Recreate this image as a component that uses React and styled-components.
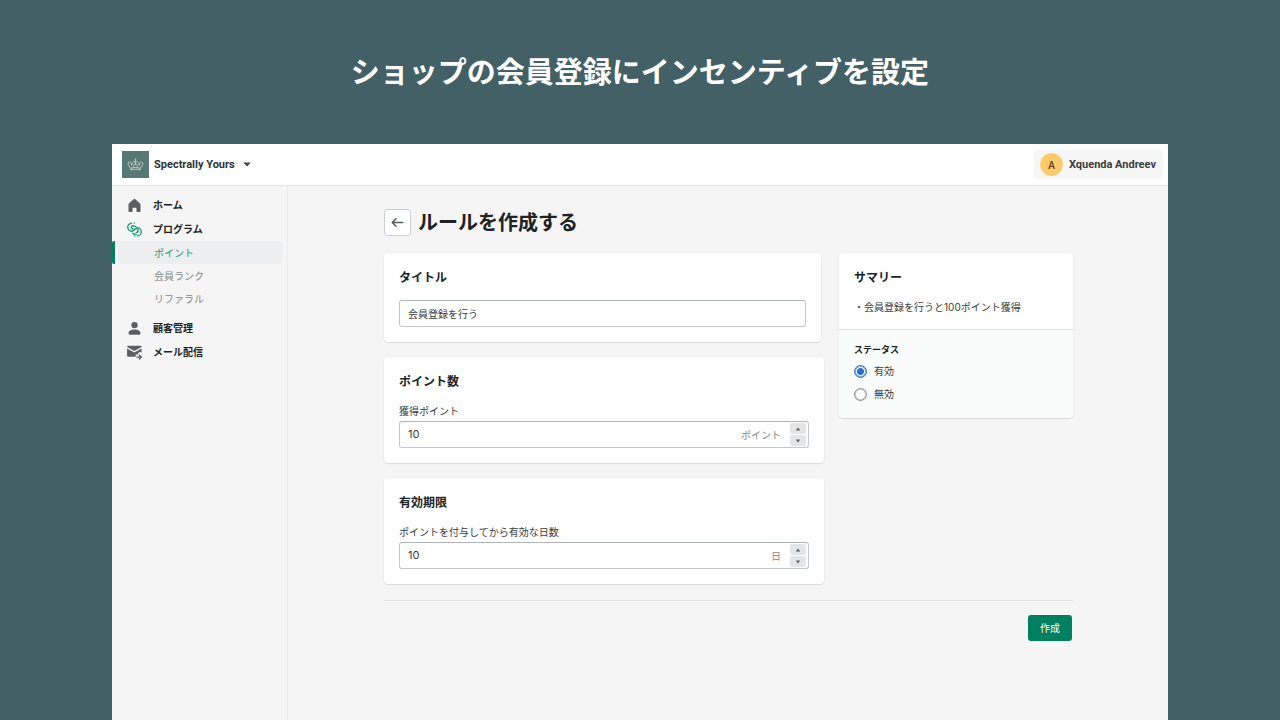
import React, { useState } from "react";
import styled, { createGlobalStyle } from "styled-components";

const GlobalStyle = createGlobalStyle`
  *, *::before, *::after { box-sizing: border-box; }
  body {
    margin: 0;
    background: #426066;
    color: #202223;
    font-family: Inter, "Noto Sans CJK JP", sans-serif;
    font-size: 10px;
    line-height: 14px;
  }
  button, input { font: inherit; color: inherit; margin: 0; }
  h1, h2, h3, p, ul { margin: 0; padding: 0; }
  ul { list-style: none; }
`;

const Slide = styled.div`
  min-height: 100vh;
  display: flex;
  flex-direction: column;
  padding: 0 112px;
`;

const Headline = styled.h1`
  height: 144px;
  padding-bottom: 4px;
  display: flex;
  align-items: center;
  justify-content: center;
  color: #fff;
  font-family: "Noto Sans CJK JP", sans-serif;
  font-size: 29px;
  line-height: 44px;
  font-weight: 700;
`;

const AppFrame = styled.div`
  flex: 1;
  display: flex;
  flex-direction: column;
  background: #f5f5f5;
`;

const TopBar = styled.header`
  display: flex;
  align-items: center;
  justify-content: space-between;
  height: 42px;
  padding: 0 5px 0 10px;
  background: #fff;
  border-bottom: 1px solid #e3e4e5;
`;

const StoreButton = styled.button`
  display: flex;
  align-items: center;
  padding: 0;
  border: 0;
  background: none;
  font-family: Roboto, sans-serif;
  font-size: 11px;
  font-weight: 700;
  color: #303234;
`;

const StoreLogo = styled.span`
  width: 27px;
  height: 27px;
  margin-right: 5px;
  display: flex;
  align-items: center;
  justify-content: center;
  background: #567876;
`;

const Caret = styled.svg`
  margin-left: 8px;
`;

const UserButton = styled.button`
  display: flex;
  align-items: center;
  gap: 5px;
  height: 29px;
  padding: 0 7px 0 5px;
  border: 0;
  border-radius: 3px;
  background: #f6f6f7;
  font-family: Roboto, sans-serif;
  font-size: 11px;
  font-weight: 700;
  color: #3a3c3e;
`;

const Avatar = styled.span`
  width: 25px;
  height: 25px;
  display: flex;
  align-items: center;
  justify-content: center;
  border: 1px solid #fff;
  border-radius: 50%;
  background: #ffc96b;
  font-family: Inter, sans-serif;
  font-size: 10px;
  font-weight: 500;
  color: #4f3a10;
`;

const Body = styled.div`
  flex: 1;
  display: flex;
`;

const Sidebar = styled.nav`
  width: 176px;
  flex: none;
  padding-top: 7px;
  border-right: 1px solid #e9eaeb;
`;

const NavLink = styled.a`
  display: flex;
  align-items: center;
  gap: 11px;
  height: 24px;
  padding-left: 15px;
  color: #202223;
  font-weight: 700;
  text-decoration: none;
`;

const SubList = styled.ul`
  margin-bottom: 6px;
`;

const SubItem = styled.li`
  padding: 0 5px 0 3px;
  border-left: 3px solid ${(p) => (p.$active ? "#008060" : "transparent")};
  border-radius: 2px 0 0 2px;
`;

const SubLink = styled.a`
  display: flex;
  align-items: center;
  height: 23px;
  padding-left: 36px;
  border-radius: 3px;
  background: ${(p) => (p.$active ? "#edeeef" : "transparent")};
  color: ${(p) => (p.$active ? "#1d9b78" : "#85888c")};
  font-weight: 400;
  text-decoration: none;
`;

const Main = styled.main`
  flex: 1;
  min-width: 0;
  padding: 23px 95px 24px 96px;
`;

const PageHeader = styled.div`
  display: flex;
  align-items: center;
  gap: 7px;
  margin-bottom: 17px;
`;

const BackButton = styled.button`
  width: 27px;
  height: 27px;
  display: flex;
  align-items: center;
  justify-content: center;
  padding: 0;
  border: 1px solid #c9cfd5;
  border-radius: 3px;
  background: #fff;
`;

const PageTitle = styled.h2`
  padding-top: 2px;
  font-size: 20px;
  line-height: 25px;
  font-weight: 700;
`;

const Columns = styled.div`
  display: flex;
  align-items: flex-start;
  gap: 15px;
`;

const FormColumn = styled.div`
  flex: 1;
  display: flex;
  flex-direction: column;
  gap: 15px;
`;

const SideColumn = styled.aside`
  width: 234px;
`;

const Card = styled.section`
  margin-right: ${(p) => (p.$inset ? "3px" : "0")};
  border-radius: 4px;
  background: #fff;
  box-shadow: 0 0 3px rgba(23, 24, 24, 0.06), 0 1px 1px rgba(0, 0, 0, 0.09);
  overflow: hidden;
`;

const CardSection = styled.div`
  display: flex;
  flex-direction: column;
  padding: 15px;
`;

const CardTitle = styled.h3`
  padding-top: 2px;
  margin-bottom: 15px;
  font-size: 12px;
  line-height: 15px;
  font-weight: 700;
`;

const FieldLabel = styled.label`
  margin-bottom: 3px;
  color: #3a3c3e;
`;

const FieldBox = styled.div`
  display: flex;
  align-items: center;
  height: 27px;
  padding: 0 2px 0 8px;
  border: 1px solid #c5c8cb;
  border-top-color: #aeb4b9;
  border-radius: 3px;
  background: #fff;
  color: #3a3c3e;
`;

const FieldInput = styled.input`
  flex: 1;
  min-width: 0;
  height: 25px;
  padding: 0 0 1px;
  border: 0;
  outline: 0;
  background: none;
  appearance: textfield;
  font-size: ${(p) => (p.type === "number" ? "11px" : "10px")};
  &::-webkit-inner-spin-button { appearance: none; margin: 0; }
`;

const Suffix = styled.span`
  margin-right: 9px;
  color: #85888c;
`;

const Spinner = styled.span`
  display: flex;
  flex-direction: column;
  gap: 1px;
`;

const SpinButton = styled.button`
  width: 16px;
  height: 11px;
  display: flex;
  align-items: center;
  justify-content: center;
  padding: 0;
  border: 0;
  border-radius: 2px;
  background: #e4e5e7;
`;

const SummaryItem = styled.li`
  color: #3a3c3e;
`;

const StatusSection = styled.fieldset`
  display: flex;
  flex-direction: column;
  gap: 7px;
  min-width: 0;
  margin: 0;
  padding: 14px 15px 16px;
  border: 0;
  border-top: 1px solid #e3e4e5;
  background: #fafbfb;
`;

const StatusTitle = styled.h3`
  font-size: 9px;
  line-height: 12px;
  font-weight: 700;
`;

const RadioLabel = styled.label`
  display: flex;
  align-items: center;
  gap: 7px;
  height: 16px;
  color: #3a3c3e;
`;

const Radio = styled.input`
  appearance: none;
  width: 13px;
  height: 13px;
  flex: none;
  border: 1px solid #8c9196;
  border-radius: 50%;
  background: #fff;
  box-shadow: inset 0 0 0 1px #c8cbce;
  &:checked {
    border-color: #2c6ecb;
    background: radial-gradient(circle, #2c6ecb 0 3px, #fff 4px);
    box-shadow: inset 0 0 0 1px #7ba5e0;
  }
`;

const PageFooter = styled.div`
  display: flex;
  justify-content: flex-end;
  margin-top: 16px;
  padding: 14px 1px 0 0;
  border-top: 1px solid #e3e4e5;
`;

const PrimaryButton = styled.button`
  height: 26px;
  padding: 0 12px;
  border: 0;
  border-radius: 3px;
  background: #008060;
  color: #fff;
  font-weight: 400;
`;

const HomeIcon = () => (
  <svg width="15" height="15" viewBox="0 0 15 15" fill="#5c5f62" aria-hidden="true">
    <path d="M6.7 1.3 1.9 5.4c-.3.3-.4.6-.4 1v6.3c0 .7.5 1.3 1.2 1.3H5c.3 0 .5-.2.5-.5V10.700c0-.5.4-.9.9-.9h2.200c.5 0 .9.4.9.9v2.800c0 .3.2.5.5.5h2.300c.7 0 1.200-.6 1.200-1.300V6.400c0-.4-.1-.7-.4-1L8.300 1.300c-.5-.4-1.100-.4-1.600 0z" />
  </svg>
);

const ProgramIcon = () => (
  <svg width="15" height="15" viewBox="0 0 15 15" fill="none" stroke="#1d9b78" strokeWidth="1.400" strokeLinecap="round" aria-hidden="true">
    <path d="M4.600 1.200A4 4 0 0 0 4.800 9.200C7 9.200 7 6.600 9.200 6.600a1.900 1.900 0 0 1 0 3.800" />
    <path d="M10.400 13.800A4 4 0 0 0 10.200 5.800C8 5.800 8 8.400 5.800 8.400" />
    <path d="M5.800 6.700a1.500 1.500 0 0 1 0-3c1.400 0 2 .7 3 .7" />
    <path d="M9.200 12.400c-1.600.4-2.600-.4-3.400-1.200" />
    <path d="M7.300.9h.1M7.700 14.100h-.1" />
  </svg>
);

const CustomerIcon = () => (
  <svg width="15" height="15" viewBox="0 0 15 15" fill="#5c5f62" aria-hidden="true">
    <circle cx="7.500" cy="4.100" r="3.200" />
    <path d="M1.500 12.300c0-2.300 2.700-3.800 6-3.800s6 1.500 6 3.800c0 .9-.6 1.500-1.500 1.500H3c-.9 0-1.500-.6-1.500-1.500z" />
  </svg>
);

const MailIcon = () => (
  <svg width="15" height="15" viewBox="0 0 15 15" aria-hidden="true">
    <path fill="#5c5f62" d="M.1 2.100C.1 1.300.7.8 1.500.8h11.700c.8 0 1.400.5 1.400 1.300L7.300 6.100z" />
    <path fill="#5c5f62" d="M.1 3.500 7.300 7.500l7.300-4v4.300l-1.700-1-1.900 1.800v1H8.700v2.200H1.500c-.8 0-1.400-.6-1.400-1.400z" />
    <path fill="none" stroke="#5c5f62" strokeWidth="1.400" strokeLinecap="round" strokeLinejoin="round" d="M9.800 12.100h4.300M12.400 10.200l1.900 1.900-1.900 1.900" />
  </svg>
);

const CrownIcon = () => (
  <svg width="17" height="13" viewBox="0 0 17 13" fill="none" stroke="#d9cfb8" strokeWidth=".9" strokeLinejoin="round" aria-hidden="true">
    <path d="M3.800 10.200C2.600 9 1.100 7.300 1.100 5.500c0-1.700 2.300-2 3-.6.300.7.500 1.400.6 2.100M13.200 10.200c1.200-1.200 2.700-2.900 2.700-4.700 0-1.700-2.300-2-3-.6-.3.700-.5 1.400-.6 2.100" />
    <path d="M4.700 7.500c0-2.600 1.700-3.700 3.800-4.700 2.100 1 3.800 2.100 3.800 4.700" />
    <path d="M3.800 10.200c3-.9 6.400-.9 9.400 0v1.700c-3-.9-6.400-.9-9.400 0zM8.500 2.800v3.600M6.900 8.900C5.800 7.200 7 5.800 8.500 6.600c1.500-.8 2.700.6 1.600 2.300" />
    <path d="M8.500.6v2M7.700 1.300h1.600" />
  </svg>
);

const ArrowIcon = () => (
  <svg width="15" height="15" viewBox="0 0 20 20" fill="#5c5f62" aria-hidden="true">
    <path d="M17 9H5.414l3.293-3.293a.999.999 0 1 0-1.414-1.414l-5 5a.999.999 0 0 0 0 1.414l5 5a.997.997 0 0 0 1.414 0 .999.999 0 0 0 0-1.414L5.414 11H17a1 1 0 1 0 0-2z" />
  </svg>
);

const Triangle = ({ down }) => (
  <svg width="6" height="4" viewBox="0 0 6 4" fill="#5c5f62" aria-hidden="true">
    <path d={down ? "M.8.500h4.400L3 3.500z" : "M.8 3.500h4.400L3 .5z"} />
  </svg>
);

function NumberField({ id, label, suffix }) {
  const [value, setValue] = useState(10);
  return (
    <>
      <FieldLabel htmlFor={id}>{label}</FieldLabel>
      <FieldBox>
        <FieldInput id={id} type="number" value={value} onChange={(e) => setValue(Number(e.target.value))} />
        <Suffix>{suffix}</Suffix>
        <Spinner>
          <SpinButton type="button" aria-label="増やす" onClick={() => setValue(value + 1)}>
            <Triangle />
          </SpinButton>
          <SpinButton type="button" aria-label="減らす" onClick={() => setValue(value - 1)}>
            <Triangle down />
          </SpinButton>
        </Spinner>
      </FieldBox>
    </>
  );
}

export default function App() {
  return (
    <Slide>
      <GlobalStyle />
      <Headline>ショップの会員登録にインセンティブを設定</Headline>
      <AppFrame>
        <TopBar>
          <StoreButton type="button">
            <StoreLogo>
              <CrownIcon />
            </StoreLogo>
            Spectrally Yours
            <Caret width="8" height="5" viewBox="0 0 8 5" fill="#4a4c4f" aria-hidden="true">
              <path d="M.9.500h6.200c.4 0 .5.400.3.600L4.400 4.200c-.2.200-.6.200-.8 0L.6 1.100C.4.900.5.500.9.500z" />
            </Caret>
          </StoreButton>
          <UserButton type="button">
            <Avatar>A</Avatar>
            Xquenda Andreev
          </UserButton>
        </TopBar>
        <Body>
          <Sidebar>
            <NavLink href="#home"><HomeIcon />ホーム</NavLink>
            <NavLink href="#program"><ProgramIcon />プログラム</NavLink>
            <SubList>
              <SubItem $active><SubLink href="#points" $active>ポイント</SubLink></SubItem>
              <SubItem><SubLink href="#ranks">会員ランク</SubLink></SubItem>
              <SubItem><SubLink href="#referral">リファラル</SubLink></SubItem>
            </SubList>
            <NavLink href="#customers"><CustomerIcon />顧客管理</NavLink>
            <NavLink href="#mail"><MailIcon />メール配信</NavLink>
          </Sidebar>
          <Main>
            <PageHeader>
              <BackButton type="button" aria-label="戻る"><ArrowIcon /></BackButton>
              <PageTitle>ルールを作成する</PageTitle>
            </PageHeader>
            <Columns>
              <FormColumn>
                <Card $inset>
                  <CardSection>
                    <CardTitle id="rule-title">タイトル</CardTitle>
                    <FieldBox>
                      <FieldInput type="text" aria-labelledby="rule-title" defaultValue="会員登録を行う" />
                    </FieldBox>
                  </CardSection>
                </Card>
                <Card>
                  <CardSection>
                    <CardTitle>ポイント数</CardTitle>
                    <NumberField id="points" label="獲得ポイント" suffix="ポイント" />
                  </CardSection>
                </Card>
                <Card>
                  <CardSection>
                    <CardTitle>有効期限</CardTitle>
                    <NumberField id="days" label="ポイントを付与してから有効な日数" suffix="日" />
                  </CardSection>
                </Card>
              </FormColumn>
              <SideColumn>
                <Card>
                  <CardSection>
                    <CardTitle>サマリー</CardTitle>
                    <ul>
                      <SummaryItem>・会員登録を行うと100ポイント獲得</SummaryItem>
                    </ul>
                  </CardSection>
                  <StatusSection aria-labelledby="status-title">
                    <StatusTitle id="status-title">ステータス</StatusTitle>
                    <RadioLabel>
                      <Radio type="radio" name="status" defaultChecked />
                      有効
                    </RadioLabel>
                    <RadioLabel>
                      <Radio type="radio" name="status" />
                      無効
                    </RadioLabel>
                  </StatusSection>
                </Card>
              </SideColumn>
            </Columns>
            <PageFooter>
              <PrimaryButton type="button">作成</PrimaryButton>
            </PageFooter>
          </Main>
        </Body>
      </AppFrame>
    </Slide>
  );
}
